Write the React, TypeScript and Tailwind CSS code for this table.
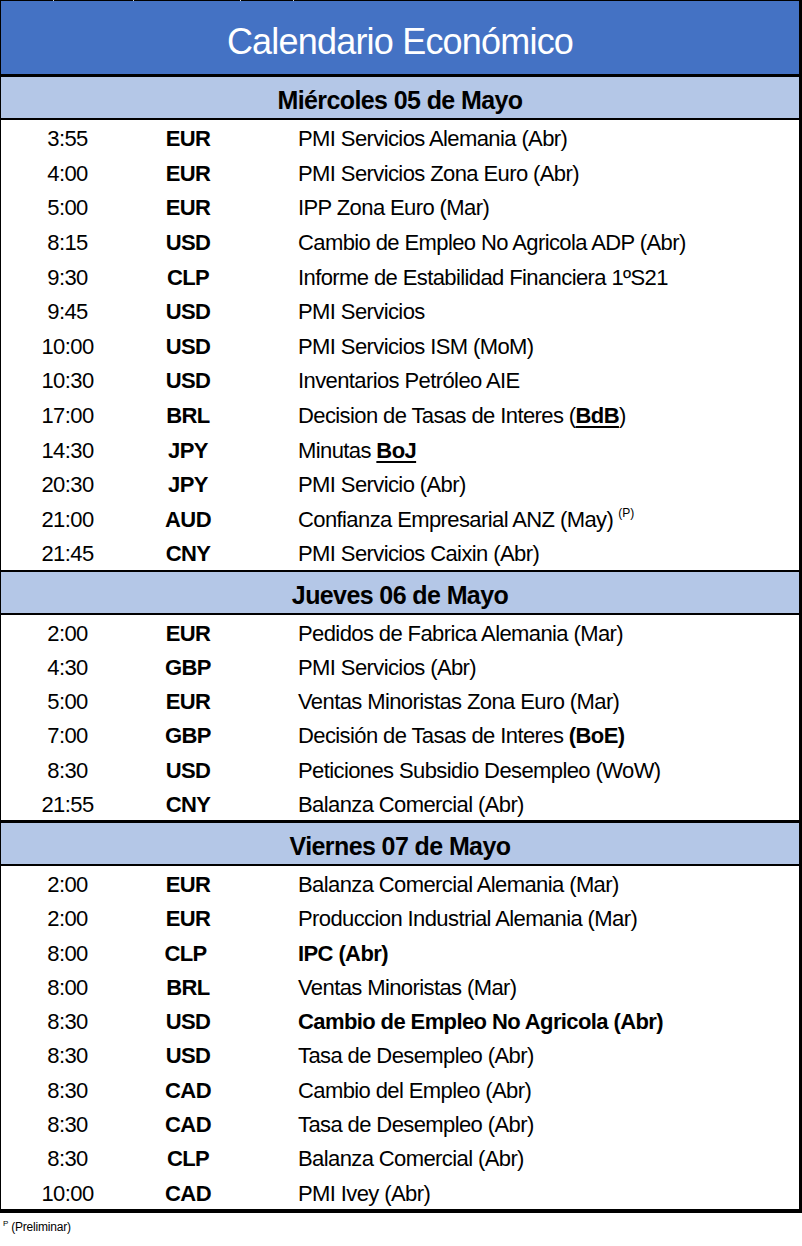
import React from 'react';

type Row = {
  time: string;
  cur: string;
  desc: React.ReactNode;
  curClass?: string;
};

type Section = {
  day: string;
  rowH: string;
  topBorder: string;
  rows: Row[];
};

const U = ({ children }: { children: React.ReactNode }) => (
  <span className="font-bold underline underline-offset-[3px] decoration-2">{children}</span>
);

const sections: Section[] = [
  {
    day: 'Miércoles 05 de Mayo',
    rowH: 'h-[34.6px]',
    topBorder: 'h-[3px]',
    rows: [
      { time: '3:55', cur: 'EUR', desc: 'PMI Servicios Alemania (Abr)' },
      { time: '4:00', cur: 'EUR', desc: 'PMI Servicios Zona Euro (Abr)' },
      { time: '5:00', cur: 'EUR', desc: 'IPP Zona Euro (Mar)' },
      { time: '8:15', cur: 'USD', desc: 'Cambio de Empleo No Agricola ADP (Abr)' },
      { time: '9:30', cur: 'CLP', desc: 'Informe de Estabilidad Financiera 1ºS21' },
      { time: '9:45', cur: 'USD', desc: 'PMI Servicios' },
      { time: '10:00', cur: 'USD', desc: 'PMI Servicios ISM (MoM)' },
      { time: '10:30', cur: 'USD', desc: 'Inventarios Petróleo AIE' },
      {
        time: '17:00',
        cur: 'BRL',
        desc: (
          <>
            Decision de Tasas de Interes (<U>BdB</U>)
          </>
        ),
      },
      {
        time: '14:30',
        cur: 'JPY',
        desc: (
          <>
            Minutas <U>BoJ</U>
          </>
        ),
      },
      { time: '20:30', cur: 'JPY', desc: 'PMI Servicio (Abr)' },
      {
        time: '21:00',
        cur: 'AUD',
        desc: (
          <>
            Confianza Empresarial ANZ (May)
            <span className="relative -top-[10px] ml-[5px] text-[12px] tracking-normal">(P)</span>
          </>
        ),
      },
      { time: '21:45', cur: 'CNY', desc: 'PMI Servicios Caixin (Abr)' },
    ],
  },
  {
    day: 'Jueves 06 de Mayo',
    rowH: 'h-[34.2px]',
    topBorder: 'h-[2px]',
    rows: [
      { time: '2:00', cur: 'EUR', desc: 'Pedidos de Fabrica Alemania (Mar)' },
      { time: '4:30', cur: 'GBP', desc: 'PMI Servicios (Abr)' },
      { time: '5:00', cur: 'EUR', desc: 'Ventas Minoristas Zona Euro (Mar)' },
      {
        time: '7:00',
        cur: 'GBP',
        desc: (
          <>
            Decisión de Tasas de Interes <span className="font-bold">(BoE)</span>
          </>
        ),
      },
      { time: '8:30', cur: 'USD', desc: 'Peticiones Subsidio Desempleo (WoW)' },
      { time: '21:55', cur: 'CNY', desc: 'Balanza Comercial (Abr)' },
    ],
  },
  {
    day: 'Viernes 07 de Mayo',
    rowH: 'h-[34.3px]',
    topBorder: 'h-[3px]',
    rows: [
      { time: '2:00', cur: 'EUR', desc: 'Balanza Comercial Alemania (Mar)' },
      { time: '2:00', cur: 'EUR', desc: 'Produccion Industrial Alemania (Mar)' },
      {
        time: '8:00',
        cur: 'CLP',
        curClass: 'pr-[5px]',
        desc: <span className="font-bold">IPC (Abr)</span>,
      },
      { time: '8:00', cur: 'BRL', desc: 'Ventas Minoristas (Mar)' },
      {
        time: '8:30',
        cur: 'USD',
        desc: <span className="font-bold">Cambio de Empleo No Agricola (Abr)</span>,
      },
      { time: '8:30', cur: 'USD', desc: 'Tasa de Desempleo (Abr)' },
      { time: '8:30', cur: 'CAD', desc: 'Cambio del Empleo (Abr)' },
      { time: '8:30', cur: 'CAD', desc: 'Tasa de Desempleo (Abr)' },
      { time: '8:30', cur: 'CLP', desc: 'Balanza Comercial (Abr)' },
      { time: '10:00', cur: 'CAD', desc: 'PMI Ivey (Abr)' },
    ],
  },
];

export default function App() {
  return (
    <div
      className="w-[802px] min-h-[1246px] bg-white text-black"
      style={{ fontFamily: '"Liberation Sans", Arial, sans-serif' }}
    >
      {/* top grid edge */}
      <div className="flex h-[1px] bg-black">
        <div className="w-[53px]" />
        <div className="w-[1px] bg-[#d0d0d0]" />
        <div className="w-[79px]" />
        <div className="w-[1px] bg-[#d0d0d0]" />
        <div className="w-[106px]" />
        <div className="w-[1px] bg-[#d0d0d0]" />
        <div className="w-[52px]" />
        <div className="w-[1px] bg-[#d0d0d0]" />
      </div>

      <div className="border-l border-l-black border-r-[3px] border-r-black border-b-[4px] border-b-black">
        {/* Title */}
        <div className="h-[73px] bg-[#4472C4] flex items-center justify-center pt-[9px]">
          <span className="text-white text-[36px] tracking-[-0.8px]">Calendario Económico</span>
        </div>

        {sections.map((s, si) => (
          <div key={s.day}>
            <div className={`${si === 0 ? 'h-[3px]' : s.topBorder} bg-black`} />
            <div className="h-[41px] bg-[#B4C7E7] flex items-center justify-center pt-[7px]">
              <span className="font-bold text-[25px] tracking-[-0.6px]">{s.day}</span>
            </div>
            <div className="h-[2px] bg-black" />
            {s.rows.map((r, i) => (
              <div
                key={i}
                className={`${s.rowH} flex items-center pt-[3px] text-[22px] tracking-[-0.6px] whitespace-nowrap`}
              >
                <div className="w-[133px] text-center">{r.time}</div>
                <div className={`w-[108px] text-center font-bold ${r.curClass ?? ''}`}>{r.cur}</div>
                <div className="pl-[56px]">{r.desc}</div>
              </div>
            ))}
          </div>
        ))}
      </div>

      {/* Footnote */}
      <div className="flex items-start pl-[3px] pt-[6px] text-[12px] tracking-[-0.2px]">
        <span className="text-[8px] leading-none mt-[1px]">P</span>
        <span className="ml-[3px] leading-none mt-[2px]">(Preliminar)</span>
      </div>
    </div>
  );
}
